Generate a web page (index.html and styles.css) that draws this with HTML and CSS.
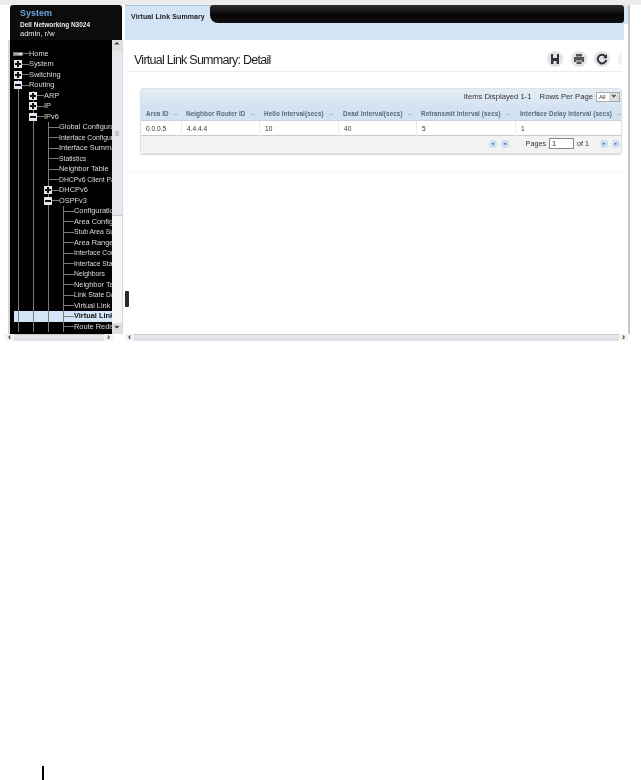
FILE: index.html
```html
<!DOCTYPE html>
<html lang="en">
<head>
<meta charset="utf-8">
<title>Virtual Link Summary</title>
<link rel="stylesheet" href="styles.css">
</head>
<body>
<div class="app">
  <aside class="side">
    <div class="brand">
      <div class="sys">System</div>
      <div class="model">Dell Networking N3024</div>
      <div class="user">admin, r/w</div>
    </div>
    <div class="treewrap">
      <nav class="tree">
        <div class="row"><span class="node leafroot"><i class="home"></i></span><span class="lb">Home</span></div>
        <div class="row"><span class="node first"><i class="ex plus"></i></span><span class="lb">System</span></div>
        <div class="row"><span class="node first"><i class="ex plus"></i></span><span class="lb">Switching</span></div>
        <div class="row"><span class="node"><i class="ex minus"></i></span><span class="lb">Routing</span></div>
        <div class="row"><span class="g"></span><span class="node"><i class="ex plus"></i></span><span class="lb">ARP</span></div>
        <div class="row"><span class="g"></span><span class="node"><i class="ex plus"></i></span><span class="lb">IP</span></div>
        <div class="row"><span class="g"></span><span class="node"><i class="ex minus"></i></span><span class="lb">IPv6</span></div>
        <div class="row"><span class="g"></span><span class="g"></span><span class="node"></span><span class="lb">Global Configuration</span></div>
        <div class="row"><span class="g"></span><span class="g"></span><span class="node"></span><span class="lb sm">Interface Configuration</span></div>
        <div class="row"><span class="g"></span><span class="g"></span><span class="node"></span><span class="lb">Interface Summary</span></div>
        <div class="row"><span class="g"></span><span class="g"></span><span class="node"></span><span class="lb sm">Statistics</span></div>
        <div class="row"><span class="g"></span><span class="g"></span><span class="node"></span><span class="lb">Neighbor Table</span></div>
        <div class="row"><span class="g"></span><span class="g"></span><span class="node"></span><span class="lb sm">DHCPv6 Client Parameters</span></div>
        <div class="row"><span class="g"></span><span class="g"></span><span class="node"><i class="ex plus"></i></span><span class="lb">DHCPv6</span></div>
        <div class="row"><span class="g"></span><span class="g"></span><span class="node"><i class="ex minus"></i></span><span class="lb">OSPFv3</span></div>
        <div class="row"><span class="g"></span><span class="g"></span><span class="g"></span><span class="node"></span><span class="lb">Configuration</span></div>
        <div class="row"><span class="g"></span><span class="g"></span><span class="g"></span><span class="node"></span><span class="lb">Area Configuration</span></div>
        <div class="row"><span class="g"></span><span class="g"></span><span class="g"></span><span class="node"></span><span class="lb sm">Stub Area Summary</span></div>
        <div class="row"><span class="g"></span><span class="g"></span><span class="g"></span><span class="node"></span><span class="lb">Area Range</span></div>
        <div class="row"><span class="g"></span><span class="g"></span><span class="g"></span><span class="node"></span><span class="lb sm">Interface Configuration</span></div>
        <div class="row"><span class="g"></span><span class="g"></span><span class="g"></span><span class="node"></span><span class="lb sm">Interface Statistics</span></div>
        <div class="row"><span class="g"></span><span class="g"></span><span class="g"></span><span class="node"></span><span class="lb sm">Neighbors</span></div>
        <div class="row"><span class="g"></span><span class="g"></span><span class="g"></span><span class="node"></span><span class="lb">Neighbor Table</span></div>
        <div class="row"><span class="g"></span><span class="g"></span><span class="g"></span><span class="node"></span><span class="lb sm">Link State Database</span></div>
        <div class="row"><span class="g"></span><span class="g"></span><span class="g"></span><span class="node"></span><span class="lb">Virtual Link Configuration</span></div>
        <div class="row sel"><span class="g"></span><span class="g"></span><span class="g"></span><span class="node"></span><span class="lb">Virtual Link Summary</span></div>
        <div class="row"><span class="g"></span><span class="g"></span><span class="g"></span><span class="node"></span><span class="lb">Route Redistribution</span></div>
      </nav>
      <div class="vbar">
        <span class="sbtn">&#8963;</span>
        <span class="thumb"><i class="grip"></i></span>
        <span class="vtrack"></span>
        <span class="sbtn down">&#8964;</span>
      </div>
    </div>
  </aside>
  <span class="handle"></span>
  <main class="main">
    <div class="tabs">
      <div class="tab">Virtual Link Summary</div>
      <div class="tabfill"></div>
    </div>
    <div class="band"></div>
    <div class="content">
      <header class="head">
        <h1>Virtual Link Summary: Detail</h1>
        <div class="tools">
          <span class="tool"><svg viewBox="0 0 16 16"><path d="M4 3h2v4h4V3h2v10H4z M6.500 10h3v3h-3z" fill="#333" fill-rule="evenodd"/></svg></span>
          <span class="tool"><svg viewBox="0 0 16 16"><path d="M5 3h6v2.500H5z M3 6h10v5h-2V9.500H5V11H3z M5.500 10.500h5v2.500h-5z" fill="#555"/></svg></span>
          <span class="tool"><svg viewBox="0 0 16 16"><path d="M11.500 5.500A4.300 4.300 0 1 0 12.300 9" fill="none" stroke="#333" stroke-width="2"/><path d="M13 3v4.200H9z" fill="#333"/></svg></span>
          <span class="tool cut"></span>
        </div>
      </header>
      <section class="panel">
        <div class="ptop">
          <span>Items Displayed 1-1</span>
          <span class="rpp">Rows Per Page</span>
          <span class="sel-box"><span class="sel-val">All</span><span class="sel-arrow">&#8964;</span></span>
        </div>
        <div class="grid ghead">
          <span>Area ID</span><span>Neighbor Router ID</span><span>Hello Interval(secs)</span><span>Dead Interval(secs)</span><span>Retransmit Interval (secs)</span><span>Interface Delay Interval (secs)</span>
        </div>
        <div class="grid gbody">
          <span>0.0.0.5</span><span>4.4.4.4</span><span>10</span><span>40</span><span>5</span><span>1</span>
        </div>
        <div class="pfoot">
          <span class="pg">&#9668;</span><span class="pg">&#9668;</span>
          <span class="plabel">Pages</span><span class="pinput">1</span><span class="pof">of 1</span>
          <span class="pg">&#9658;</span><span class="pg">&#9658;</span>
        </div>
      </section>
      <div class="rule"></div>
    </div>
  </main>
</div>
<div class="hbars">
  <div class="hbar left"><span class="arr">&#8249;</span><span class="hthumb"></span><span class="arr">&#8250;</span></div>
  <div class="hbar right"><span class="arr">&#8249;</span><span class="hthumb"></span><span class="arr">&#8250;</span></div>
</div>
<div class="mark"></div>
</body>
</html>
```
FILE: styles.css
```css
* { box-sizing: border-box; }
html, body { margin: 0; padding: 0; background: #fff; overflow: hidden; }
body { font-family: "Liberation Sans", Arial, sans-serif; height: 780px; }

.app {
  position: relative;
  display: flex;
  height: 334px;
  padding-top: 5px;
  background: linear-gradient(#ececec 0, #ececec 5px, #fff 5px);
}

/* side */
.side { width: 115px; margin-left: 8px; display: flex; flex-direction: column; flex: none; }
.brand {
  height: 35px; margin-left: 2px; width: 112px; background: #0c0c0c; color: #fff;
  border-radius: 3px 3px 0 0; padding: 3px 0 0 10px;
  filter: blur(.3px);
}
.sys { font-size: 9px; font-weight: bold; color: #6ea4dc; line-height: 11px; }
.model { font-size: 6.500px; line-height: 9px; margin-top: 1px; font-weight: bold; color: #e8e8e8; }
.user { font-size: 7.500px; line-height: 9px; color: #e8e8e8; }
.treewrap { display: flex; flex: 1; min-height: 0; background: #d8d8d8; padding-left: 2px; }
.tree {
  width: 102px; background: #000; padding: 8.500px 0 0 1px; overflow: hidden;
  filter: blur(.3px);
}
.row { display: flex; height: 10.500px; color: #dcdcdc; white-space: nowrap; }
.g, .node { width: 15px; flex: none; height: 100%; }
.g { background: linear-gradient(#7a7a7a, #7a7a7a) 7px 0 / 1px 100% no-repeat; }
.node {
  width: 18px; display: flex; align-items: center; padding-left: 3px;
  background:
    linear-gradient(#7a7a7a, #7a7a7a) 7px 0 / 1px 100% no-repeat,
    linear-gradient(#7a7a7a, #7a7a7a) 7px 50% / 11px 1px no-repeat;
}
.leafroot, .first { background: linear-gradient(#7a7a7a, #7a7a7a) 7px 50% / 11px 1px no-repeat; }
.lb { font-size: 7.400px; line-height: 10.500px; }
.lb.sm { font-size: 6.800px; }
.ex { display: block; width: 8px; height: 8px; background-color: #e3ebf4; }
.minus { background: linear-gradient(#111, #111) 50% 50% / 6px 2px no-repeat #dfe7f0; }
.plus {
  background:
    linear-gradient(#111, #111) 50% 50% / 6px 2px no-repeat,
    linear-gradient(#111, #111) 50% 50% / 2px 6px no-repeat #dfe7f0;
}
.home { display: block; width: 10px; height: 4px; margin-left: -1px; background: linear-gradient(90deg, #9ab88f 60%, #ddd 60%); border: 1px solid #777; }
.sel { background: #d3e4f7; color: #111; margin-left: 3px; }
.sel .g:first-child { width: 12px; background-position: 4px 0; }
.sel .lb { font-weight: bold; }

.vbar { width: 10px; flex: none; display: flex; flex-direction: column; background: #f1f1f1; }
.sbtn { height: 11px; flex: none; background: #dedede; color: #222; font-size: 9px; line-height: 13px; text-align: center; font-weight: bold; }
.down { line-height: 5px; }
.thumb { height: 165px; flex: none; background: #e7e8ee; border-bottom: 1px solid #ccc; display: flex; align-items: center; justify-content: center; }
.grip { display: block; width: 4px; height: 5px; background: #c4c5cc; }
.vtrack { flex: 1; background: #f6f6f6; }

.handle { position: absolute; left: 125px; top: 291px; width: 4px; height: 16px; background: #2a2a2e; border-radius: 1px; z-index: 2; }

/* main */
.main { width: 505px; margin-left: 2px; flex: none; display: flex; flex-direction: column; border-right: 2px solid #c4c4c4; position: relative; }
.tabs { display: flex; height: 19px; background: #d3e4f5; padding-right: 4px; }
.tab {
  width: 85px; padding: 5px 0 0 6px; background: #d3e4f5; border-top: 1px solid #a9c4de;
  font-size: 7px; font-weight: bold; color: #222; line-height: 11px; letter-spacing: .1px;
  filter: blur(.3px);
}
.tabfill { flex: 1; background: linear-gradient(#2e2e2e, #050505 55%, #111); border-radius: 3px 3px 3px 8px; height: 18px; }
.band { height: 16px; background: #d3e4f5; margin-right: 4px; flex: none; }
.content { flex: 1; background: #fff; padding: 0 6px 0 4px; overflow: hidden; filter: blur(.3px); }
.head { height: 32px; border-bottom: 1px solid #ececec; display: flex; align-items: center; justify-content: space-between; padding: 6px 0 0 5px; }
h1 { margin: 2px 0 0; font-size: 12.500px; font-weight: normal; color: #222; letter-spacing: -.75px; }
.tools { display: flex; gap: 7.500px; width: 75px; overflow: hidden; flex: none; }
.tool {
  width: 16px; height: 16px; flex: none; border-radius: 50%; background: #e3e4ea;
  display: block;
}
.tool svg { display: block; width: 16px; height: 16px; }
.cut { background: #f1f1f3; }

.panel { margin: 16px 0 0 11px; border: 1px solid #dfe1e4; border-radius: 3px; box-shadow: 0 1px 1px #d4d4d4; }
.ptop {
  height: 17px; display: flex; justify-content: flex-end; align-items: center;
  font-size: 7.700px; color: #333; padding: 0 1px 2px 0; gap: 8px;
  background: linear-gradient(#e3edf6, #d6e4f2);
}
.sel-box { display: flex; width: 24px; height: 10px; border: 1px solid #aaa; background: #fff; margin-left: -5px; }
.sel-val { flex: 1; font-size: 6px; line-height: 8px; padding-left: 2px; }
.sel-arrow { width: 10px; background: #ddd; font-size: 9px; line-height: 3px; text-align: center; font-weight: bold; }
.grid { display: grid; grid-template-columns: 40px 78px 79px 78px 99px 1fr; }
.ghead { height: 15px; background: #d3e2f0; color: #566a7e; font-size: 6.300px; font-weight: bold; line-height: 15px; border-bottom: 1px solid #c4d2e0; letter-spacing: .1px; white-space: nowrap; }
.ghead span, .gbody span { padding-left: 5px; }
.ghead span::after { content: ""; display: inline-block; width: 4px; height: 1px; margin-left: 5px; vertical-align: middle; background: #a8bfd6; }
.gbody { height: 15px; font-size: 6.600px; line-height: 15px; color: #333; border-bottom: 1px solid #c9c9c9; }
.gbody span + span { border-left: 1px solid #ececec; }
.pfoot {
  height: 17px; background: #f2f2f2; display: flex; align-items: center; justify-content: flex-end;
  font-size: 7.200px; color: #333; padding: 0 1px 2px 0;
}
.pg { width: 8px; height: 8px; border-radius: 50%; background: #cfdcf2; color: #3c5ca0; font-size: 4px; line-height: 8px; text-align: center; margin-left: 4px; }
.plabel { margin-left: 17px; }
.pinput { width: 25px; height: 11px; margin-left: 3px; background: #fff; border: 1px solid #888; font-size: 7.500px; line-height: 10px; padding-left: 2px; }
.pof { margin: 0 7px 0 3px; }
.rule { height: 1px; background: #f4f4f4; margin-top: 18px; }

/* bottom scrollbars */
.hbars { display: flex; height: 7px; padding-left: 5px; overflow: hidden; background: #fff; }
.hbar { display: flex; height: 7px; background: linear-gradient(#c8c8cc 0, #c8c8cc 1px, #e8e8ee 1px, #dcdce4); color: #222; font-size: 9px; line-height: 6px; font-weight: bold; }
.hbar.left { width: 108px; }
.hbar.right { width: 503px; margin-left: 12px; }
.arr { width: 9px; text-align: center; background: #f2f2f2; flex: none; }
.hthumb { flex: 1; }
.mark { width: 2px; height: 14px; margin: 425px 0 0 42px; background: #000; }
```
